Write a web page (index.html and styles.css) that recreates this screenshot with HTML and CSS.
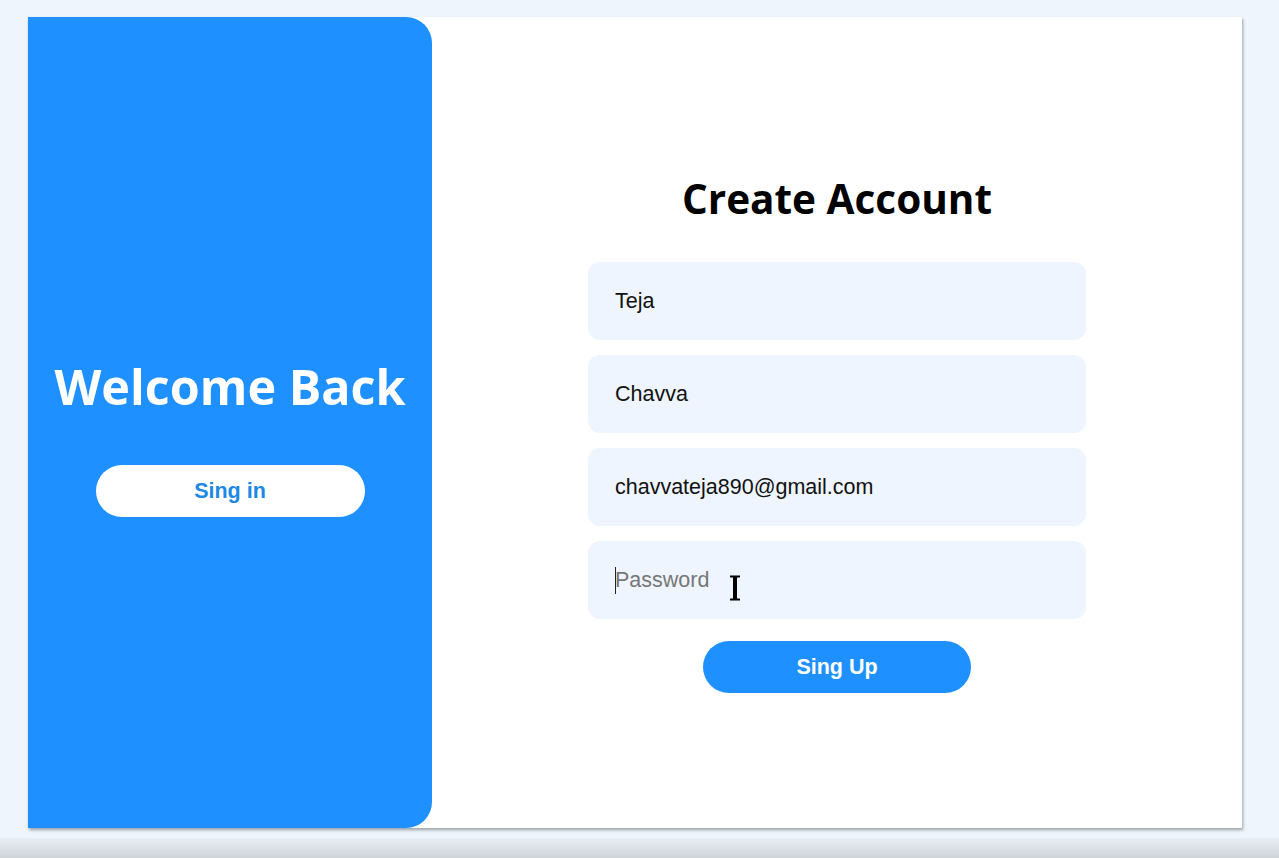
FILE: index.html
```html
<!DOCTYPE html>
<html lang="en">
<head>
<meta charset="utf-8">
<title>Create Account</title>
<link rel="stylesheet" href="styles.css">
</head>
<body>
<div class="page">
  <main class="container">
    <section class="welcome">
      <h2 class="welcome-title">Welcome Back</h2>
      <button class="btn-ghost" type="button">Sing in</button>
    </section>
    <section class="signup">
      <h1 class="signup-title">Create Account</h1>
      <form class="form">
        <input class="field" type="text" value="Teja">
        <input class="field" type="text" value="Chavva">
        <input class="field" type="email" value="chavvateja890@gmail.com">
        <div class="field-wrap">
          <input class="field field-focus" type="password" placeholder="Password">
          <span class="caret"></span>
          <svg class="ibeam" width="14" height="26" viewBox="0 0 14 26" aria-hidden="true">
            <path d="M2 1.5h4v23H2M12 1.5H8v23h4M6 1.5h2M6 24.5h2" fill="none" stroke="#000" stroke-width="2"/>
          </svg>
        </div>
        <button class="btn-primary" type="button">Sing Up</button>
      </form>
    </section>
  </main>
  <div class="bottom-bar"></div>
</div>
</body>
</html>
```
FILE: styles.css
```css
* { box-sizing: border-box; }
html, body { margin: 0; padding: 0; }
body {
  background: #eef5fd;
  font-family: "Liberation Sans", Arial, sans-serif;
  width: 1279px;
  height: 858px;
  overflow: hidden;
}
.page {
  height: 858px;
  display: flex;
  flex-direction: column;
  padding-top: 17px;
}
.container {
  margin-left: 28px;
  width: 1214px;
  height: 811px;
  display: flex;
  background: #fff;
  box-shadow: 1px 2px 3px rgba(0,0,0,0.35);
}
.welcome {
  width: 404px;
  background: #1e90ff;
  border-radius: 0 26px 26px 0;
  display: flex;
  flex-direction: column;
  align-items: center;
  padding-top: 339px;
}
.welcome-title {
  margin: 0;
  color: #fff;
  font-family: "Open Sans", "Noto Sans", sans-serif;
  font-weight: 700;
  font-size: 48.5px;
  line-height: 60px;
  letter-spacing: 0;
}
.btn-ghost {
  margin-top: 49px;
  width: 269px;
  height: 52px;
  border: none;
  border-radius: 26px;
  background: #fff;
  color: #1e88e5;
  font-family: "Liberation Sans", Arial, sans-serif;
  font-weight: 700;
  font-size: 21.5px;
  padding: 0;
}
.signup {
  flex: 1;
  display: flex;
  flex-direction: column;
  align-items: center;
  padding-top: 152px;
}
.signup-title {
  margin: 0;
  font-family: "Open Sans", "Noto Sans", sans-serif;
  font-weight: 700;
  font-size: 40.5px;
  line-height: 60px;
  color: #000;
  letter-spacing: 0;
}
.form {
  margin-top: 33px;
  width: 498px;
  display: flex;
  flex-direction: column;
  align-items: center;
  gap: 15px;
}
.field-wrap {
  position: relative;
  width: 100%;
}
.field {
  width: 100%;
  height: 78px;
  border: none;
  outline: none;
  border-radius: 12px;
  background: #eef5fe;
  padding: 0 27px;
  font-family: "Liberation Sans", Arial, sans-serif;
  font-size: 21.5px;
  color: #111;
}
.field::placeholder { color: #777; }
.caret {
  position: absolute;
  left: 27px;
  top: 26px;
  width: 1px;
  height: 27px;
  background: #222;
}
.ibeam {
  position: absolute;
  left: 140px;
  top: 34px;
}
.btn-primary {
  margin-top: 7px;
  width: 268px;
  height: 52px;
  border: none;
  border-radius: 26px;
  background: #1e90ff;
  color: #fff;
  font-family: "Liberation Sans", Arial, sans-serif;
  font-weight: 700;
  font-size: 21.5px;
  padding: 0;
}
.bottom-bar {
  margin-top: 10px;
  height: 20px;
  background: linear-gradient(#e8eef5, #cfd4d9);
}
```
